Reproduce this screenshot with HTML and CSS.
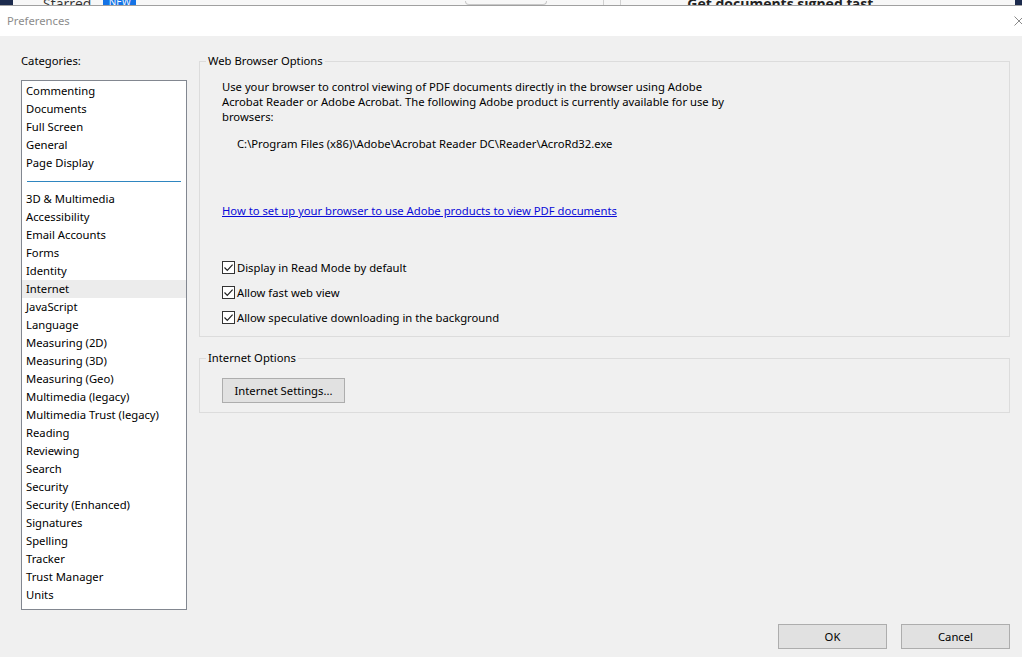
FILE: index.html
```html
<!DOCTYPE html>
<html>
<head>
	<title>Preferences</title>
	<link rel="stylesheet" href="styles.css">
</head>
<body>

<div class="behind">
	<span class="navy"></span>
	<span class="starred">Starred</span>
	<span class="badge">NEW</span>
	<span class="search-box"></span>
	<span class="vline"></span>
	<span class="vline second"></span>
	<span class="promo">Get documents signed fast</span>
	<span class="navy right"></span>
</div>

<div class="titlebar">
	<span class="title">Preferences</span>
	<svg class="close" width="10" height="10" viewBox="0 0 10 10">
		<path d="M0.5 0.5 L9.5 9.5 M9.5 0.5 L0.5 9.5" stroke="#8a8a8a" stroke-width="1" fill="none"/>
	</svg>
</div>

<div class="content">
	<div class="categories">
		<div class="label">Categories:</div>
		<ul class="list">
			<li>Commenting</li>
			<li>Documents</li>
			<li>Full Screen</li>
			<li>General</li>
			<li>Page Display</li>
			<li class="sep"></li>
			<li>3D &amp; Multimedia</li>
			<li>Accessibility</li>
			<li>Email Accounts</li>
			<li>Forms</li>
			<li>Identity</li>
			<li class="selected">Internet</li>
			<li>JavaScript</li>
			<li>Language</li>
			<li>Measuring (2D)</li>
			<li>Measuring (3D)</li>
			<li>Measuring (Geo)</li>
			<li>Multimedia (legacy)</li>
			<li>Multimedia Trust (legacy)</li>
			<li>Reading</li>
			<li>Reviewing</li>
			<li>Search</li>
			<li>Security</li>
			<li>Security (Enhanced)</li>
			<li>Signatures</li>
			<li>Spelling</li>
			<li>Tracker</li>
			<li>Trust Manager</li>
			<li>Units</li>
		</ul>
	</div>

	<div class="panel">
		<fieldset class="group browser">
			<legend>Web Browser Options</legend>
			<p class="intro">Use your browser to control viewing of PDF documents directly in the browser using Adobe<br>
				Acrobat Reader or Adobe Acrobat. The following Adobe product is currently available for use by<br>
				browsers:</p>
			<p class="path">C:\Program Files (x86)\Adobe\Acrobat Reader DC\Reader\AcroRd32.exe</p>
			<a class="help" href="#">How to set up your browser to use Adobe products to view PDF documents</a>

			<div class="checks">
				<label class="check"><span class="box"><svg width="11" height="11" viewBox="0 0 11 11"><path d="M1.5 5.5 L4.3 8.3 L9.6 2.6" stroke="#222" stroke-width="1.2" fill="none"/></svg></span>Display in Read Mode by default</label>
				<label class="check"><span class="box"><svg width="11" height="11" viewBox="0 0 11 11"><path d="M1.5 5.5 L4.3 8.3 L9.6 2.6" stroke="#222" stroke-width="1.2" fill="none"/></svg></span>Allow fast web view</label>
				<label class="check"><span class="box"><svg width="11" height="11" viewBox="0 0 11 11"><path d="M1.5 5.5 L4.3 8.3 L9.6 2.6" stroke="#222" stroke-width="1.2" fill="none"/></svg></span>Allow speculative downloading in the background</label>
			</div>
		</fieldset>

		<fieldset class="group internet">
			<legend>Internet Options</legend>
			<button class="btn settings">Internet Settings...</button>
		</fieldset>
	</div>
</div>

<div class="footer">
	<button class="btn wide">OK</button>
	<button class="btn wide">Cancel</button>
</div>

</body>
</html>
```

FILE: styles.css
```css
html, body {
	margin: 0;
	height: 100%;
	overflow: hidden;
}

body {
	background-color: #f0f0f0;
	color: #000;
	font-family: "Noto Sans", "Liberation Sans", sans-serif;
	font-size: 11.25px;
	line-height: 18px;
}

/* window behind the dialog, only its bottom edge shows */
.behind {
	height: 5px;
	border-bottom: solid 1px #a0a0a0;
	background-color: #f7f7f7;
	display: flex;
	align-items: flex-end;
	overflow: hidden;
	font-family: "Open Sans", sans-serif;
}

.behind .navy {
	width: 13px;
	height: 5px;
	background-color: #1c2b4d;
}

.behind .navy.right {
	width: 7px;
	margin-left: auto;
}

.behind .starred {
	margin-left: 30px;
	font-size: 14px;
	line-height: 14px;
	margin-bottom: -6px;
	color: #333;
}

.behind .badge {
	margin-left: 12px;
	width: 33px;
	height: 5px;
	background-color: #1473e6;
	color: #fff;
	font-size: 10px;
	line-height: 5px;
	text-align: center;
	overflow: hidden;
}

.behind .search-box {
	margin-left: 329px;
	width: 80px;
	height: 3px;
	border: solid 1px #c8c8c8;
	border-top: none;
	border-radius: 0 0 6px 6px;
}

.behind .vline {
	margin-left: 56px;
	width: 1px;
	height: 5px;
	background-color: #d0d0d0;
}

.behind .vline.second {
	margin-left: 16px;
}

.behind .promo {
	margin-left: 66px;
	font-weight: bold;
	font-size: 14px;
	line-height: 14px;
	margin-bottom: -6px;
	color: #222;
}

.titlebar {
	height: 30px;
	background-color: #fff;
	display: flex;
	align-items: center;
	padding: 0 0 0 7px;
}

.titlebar .title {
	color: #8c8c8c;
}

.titlebar .close {
	margin-left: auto;
	margin-right: -2px;
}

.content {
	display: flex;
	gap: 12px;
	padding: 16px 12px 0 21px;
}

.categories {
	width: 166px;
	flex: none;
}

.label {
	height: 18px;
	margin-bottom: 10px;
}

.list {
	list-style: none;
	margin: 0;
	padding: 1px 0 0;
	height: 527px;
	background-color: #fff;
	border: solid 1px #828790;
}

.list li {
	height: 18px;
	padding-left: 4px;
	white-space: nowrap;
}

.list li.selected {
	background-color: #ececec;
}

.list li.sep {
	padding: 9px 5px 0;
	height: 9px;
}

.list li.sep::after {
	content: "";
	display: block;
	height: 1px;
	background-color: #2f86c0;
}

.panel {
	flex: 1;
}

.group {
	margin: 0;
	border: solid 1px #dcdcdc;
	padding: 0 0 0 6px;
}

.group legend {
	padding: 0 2px;
	line-height: 18px;
}

.browser {
	padding-bottom: 6px;
}

.intro {
	margin: 9px 0 0 16px;
	line-height: 15px;
}

.path {
	margin: 12px 0 0 31px;
	line-height: 15px;
}

.help {
	display: block;
	margin: 52px 0 0 16px;
	width: max-content;
	line-height: 15px;
	color: #0a0ad8;
}

.checks {
	margin: 37px 0 0 16px;
}

.check {
	display: flex;
	align-items: center;
	height: 25px;
}

.box {
	width: 11px;
	height: 11px;
	border: solid 1px #333;
	background-color: #fff;
	margin-right: 2px;
	display: flex;
}

.internet {
	margin-top: 12px;
	padding-top: 11px;
	padding-bottom: 9px;
}

.btn {
	font-family: inherit;
	font-size: 11.25px;
	color: #000;
	background-color: #e1e1e1;
	border: solid 1px #adadad;
	padding: 0;
	height: 25px;
	display: block;
}

.settings {
	margin-left: 16px;
	width: 123px;
}

.footer {
	display: flex;
	justify-content: flex-end;
	gap: 14px;
	padding: 14px 12px 0 0;
}

.btn.wide {
	width: 109px;
}
```
